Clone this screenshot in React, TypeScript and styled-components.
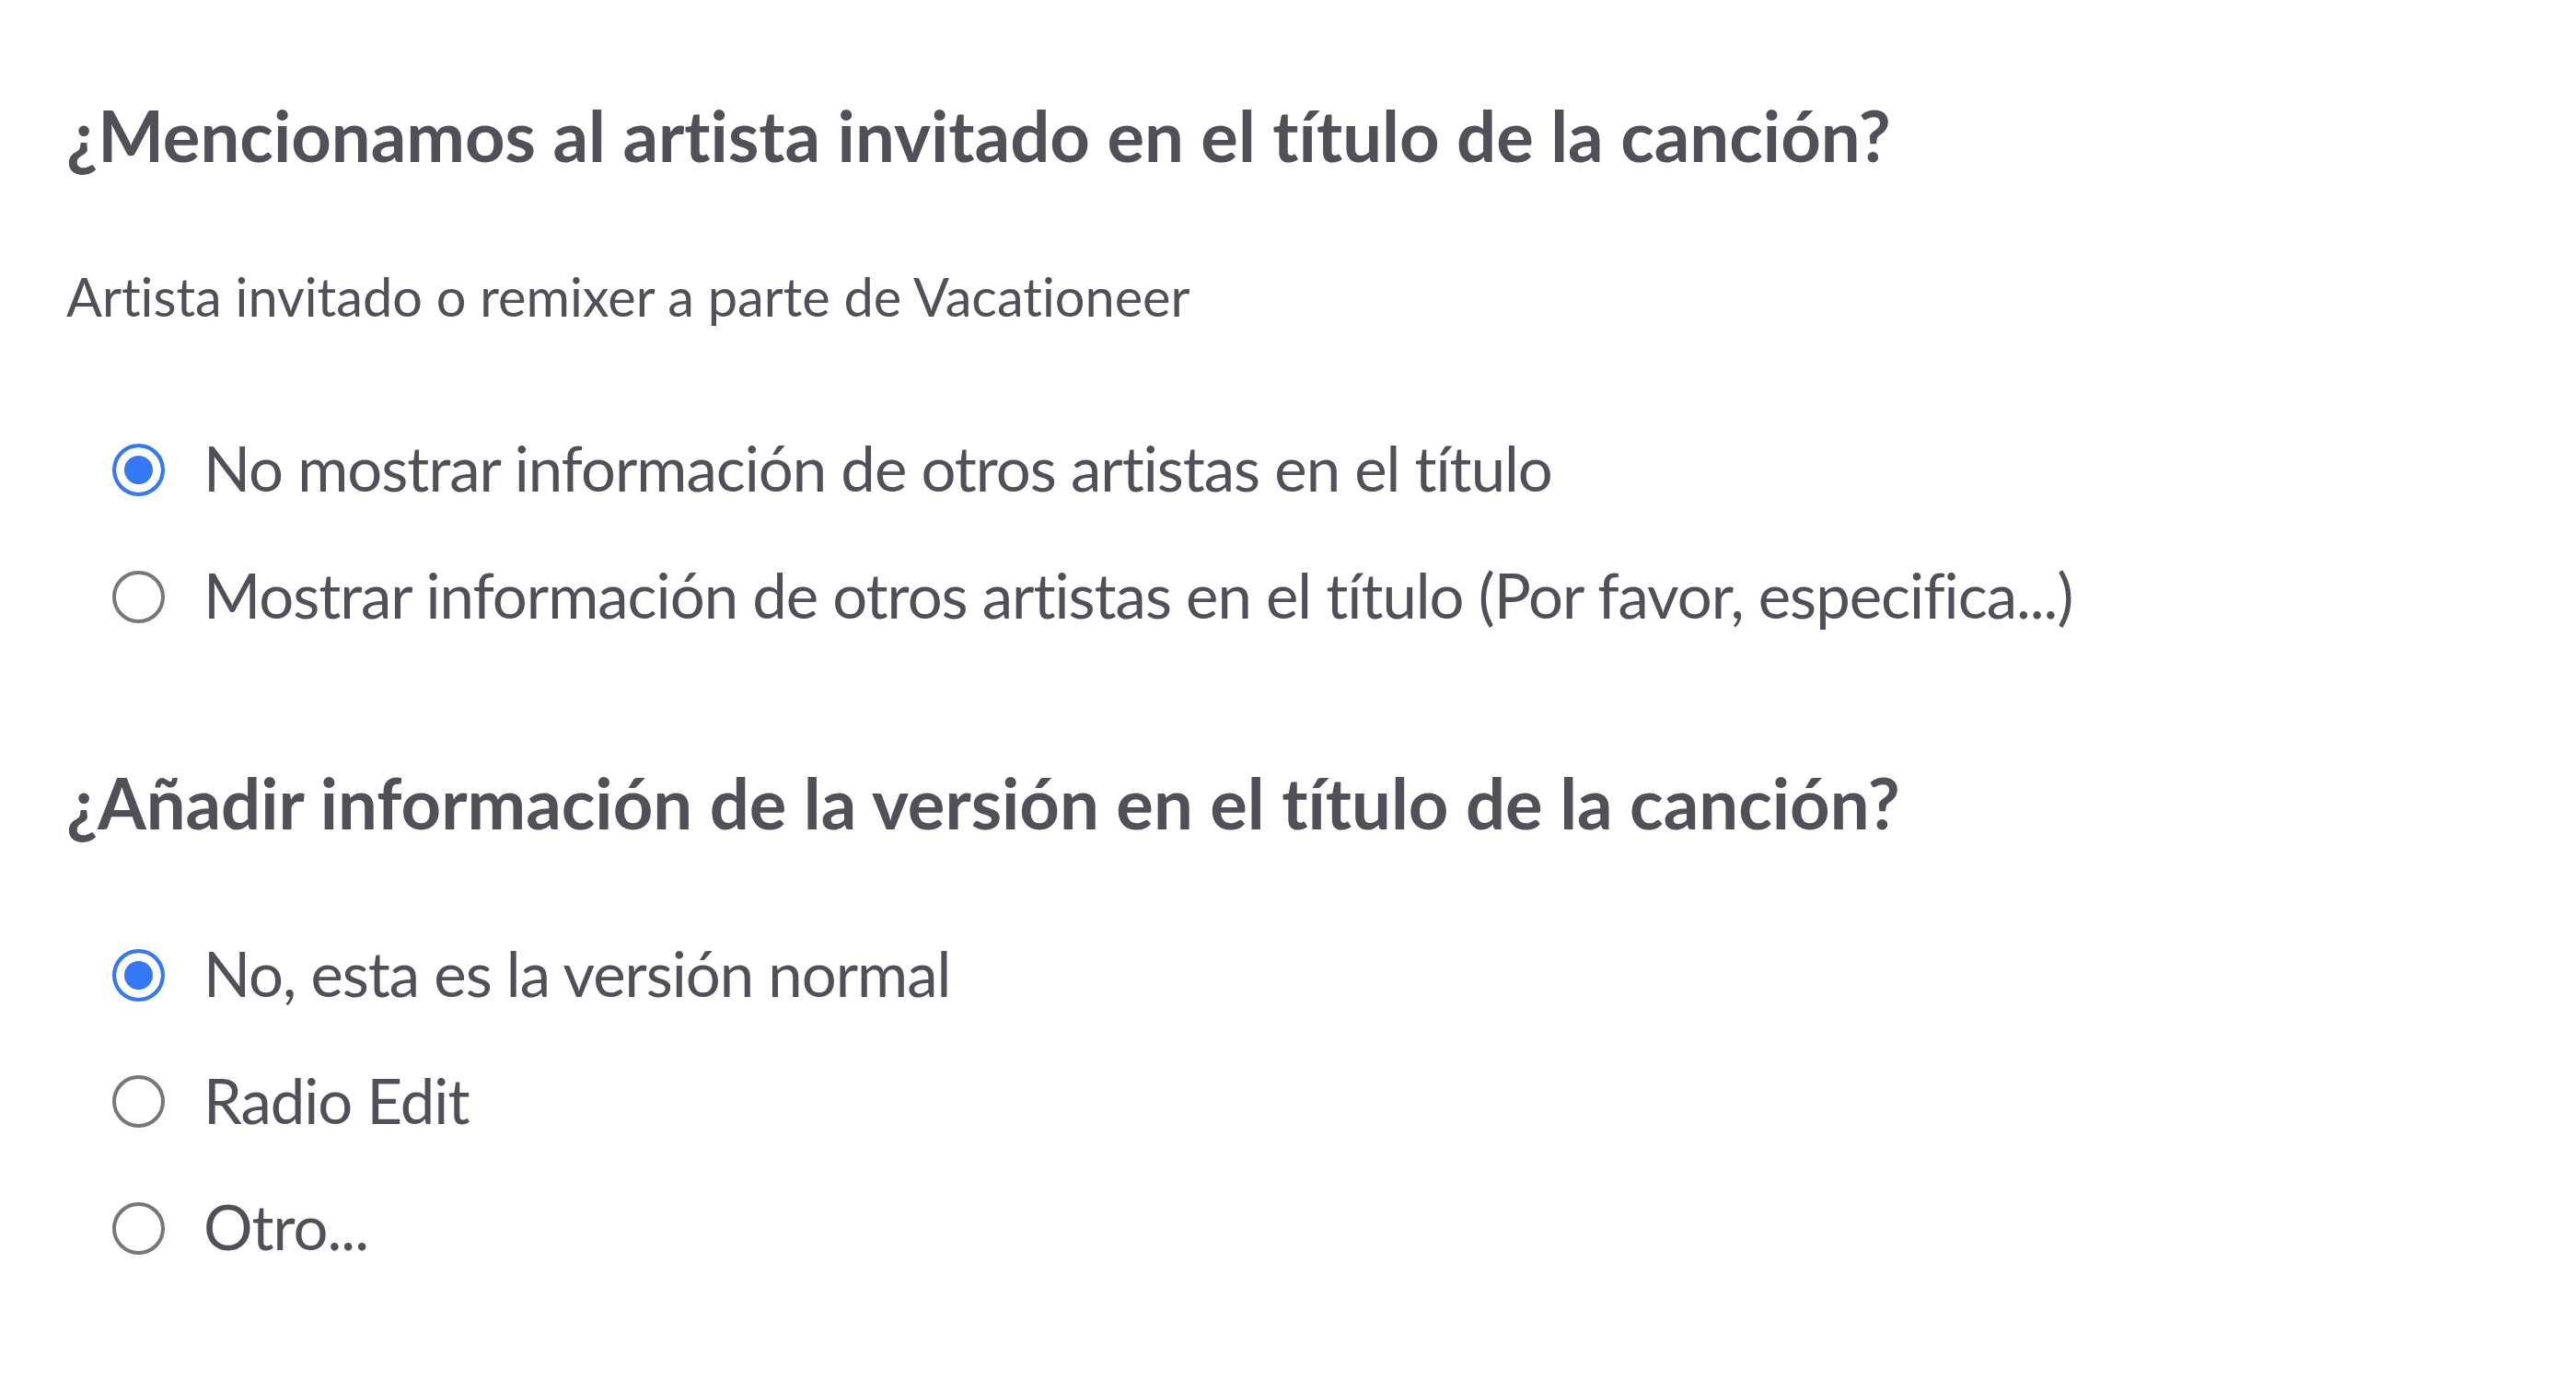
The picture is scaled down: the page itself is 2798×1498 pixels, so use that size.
import styled, { createGlobalStyle } from "styled-components";

const GlobalStyle = createGlobalStyle`
  html, body {
    margin: 0;
    padding: 0;
    background: #ffffff;
  }
  body {
    font-family: Lato, "Noto Sans", "Liberation Sans", sans-serif;
    font-variant-ligatures: no-common-ligatures;
    color: #505059;
  }
`;

/** Whole form page */
const Page = styled.main`
  display: flex;
  flex-direction: column;
  padding: 101px 0 0 72px;
`;

const Question = styled.h2<{ gap?: number }>`
  font-size: 76px;
  font-weight: 700;
  line-height: 1.2;
  margin: ${({ gap = 0 }) => gap}px 0 0;
`;

const Hint = styled.p`
  font-size: 57.7px;
  font-weight: 400;
  line-height: 1.2;
  margin: 95px 0 0;
`;

const OptionList = styled.div<{ gap: number }>`
  display: flex;
  flex-direction: column;
  gap: 57px;
  margin: ${({ gap }) => gap}px 0 0 50px;
`;

const OptionRow = styled.label`
  align-items: center;
  display: flex;
  gap: 42px;
  font-size: 67px;
  letter-spacing: -1px;
  line-height: 1.2;
  cursor: pointer;
`;

const Radio = styled.input.attrs({ type: "radio" })`
  appearance: none;
  box-sizing: border-box;
  flex: none;
  width: 57px;
  height: 57px;
  margin: 4px 0 0;
  border: 4.5px solid #777777;
  border-radius: 50%;
  background: #ffffff;

  &:checked {
    border-color: #3478f6;
    background: #3478f6;
    box-shadow: inset 0 0 0 9px #ffffff;
  }
`;

type Option = { label: string; checked?: boolean };

const Options = ({ name, options, gap }: { name: string; options: Option[]; gap: number }) => (
  <OptionList gap={gap}>
    {options.map((o) => (
      <OptionRow key={o.label}>
        <Radio name={name} defaultChecked={o.checked} />
        <span>{o.label}</span>
      </OptionRow>
    ))}
  </OptionList>
);

export default function App() {
  return (
    <>
      <GlobalStyle />
      <Page>
        <Question>¿Mencionamos al artista invitado en el título de la canción?</Question>
        <Hint>Artista invitado o remixer a parte de Vacationeer</Hint>
        <Options
          name="featured"
          gap={112}
          options={[
            { label: "No mostrar información de otros artistas en el título", checked: true },
            { label: "Mostrar información de otros artistas en el título (Por favor, especifica...)" }
          ]}
        />
        <Question gap={140}>¿Añadir información de la versión en el título de la canción?</Question>
        <Options
          name="version"
          gap={100}
          options={[
            { label: "No, esta es la versión normal", checked: true },
            { label: "Radio Edit" },
            { label: "Otro..." }
          ]}
        />
      </Page>
    </>
  );
}
